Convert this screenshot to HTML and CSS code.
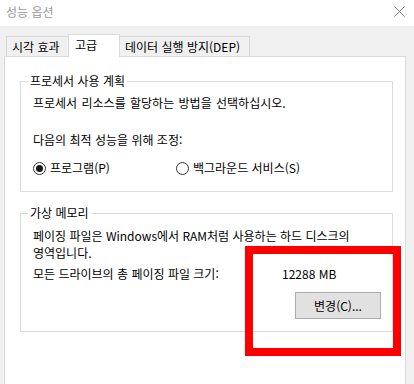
FILE: index.html
```html
<!DOCTYPE html>
<html lang="ko">
<head>
<meta charset="utf-8">
<title>성능 옵션</title>
<link rel="stylesheet" href="styles.css">
</head>
<body>
<div class="window">
  <div class="titlebar">
    <span class="title">성능 옵션</span>
    <svg class="close" width="11" height="11" viewBox="0 0 11 11"><path d="M0.5 0.5 L10.5 10.5 M10.5 0.5 L0.5 10.5" stroke="#7a7a7a" stroke-width="1" fill="none"/></svg>
  </div>
  <div class="tabs">
    <div class="tab tab-visual">시각 효과</div>
    <div class="tab tab-adv selected">고급</div>
    <div class="tab tab-dep">데이터 실행 방지(DEP)</div>
  </div>
  <div class="panel">
    <fieldset class="group group-cpu">
      <legend>프로세서 사용 계획</legend>
      <p class="line first">프로세서 리소스를 할당하는 방법을 선택하십시오.</p>
      <p class="line adjust">다음의 최적 성능을 위해 조정:</p>
      <div class="radios">
        <label class="radio radio-prog"><span class="circle checked"></span>프로그램(P)</label>
        <label class="radio"><span class="circle"></span>백그라운드 서비스(S)</label>
      </div>
    </fieldset>
    <fieldset class="group group-vm">
      <legend>가상 메모리</legend>
      <p class="desc">페이징 파일은 Windows에서 RAM처럼 사용하는 하드 디스크의<br>영역입니다.</p>
      <div class="total"><span class="total-label">모든 드라이브의 총 페이징 파일 크기:</span><span class="total-value">12288 MB</span></div>
      <div class="btnrow"><button class="btn">변경(C)...</button></div>
    </fieldset>
  </div>
  <div class="highlight"></div>
</div>
</body>
</html>
```
FILE: styles.css
```css
html, body {
  margin: 0;
  padding: 0;
}
body {
  width: 414px;
  height: 384px;
  overflow: hidden;
  background: #f0f0f0;
  font-family: "Noto Sans CJK KR", "Noto Sans", sans-serif;
  font-size: 12px;
  color: #000;
}
.window {
  position: relative;
  width: 414px;
  height: 384px;
}
.titlebar {
  height: 26px;
  background: #fff;
  display: flex;
  align-items: center;
  justify-content: space-between;
  padding: 0 9px 0 6px;
  box-sizing: border-box;
}
.title {
  color: #9a9a9a;
  font-size: 12px;
  line-height: 16px;
  margin-top: -3px;
}
.close {
  margin-top: -3px;
}
.tabs {
  height: 30px;
  display: flex;
  align-items: flex-end;
  padding-left: 6px;
  position: relative;
  z-index: 2;
}
.tab {
  box-sizing: border-box;
  height: 20px;
  border: 1px solid #d9d9d9;
  border-bottom: none;
  padding-left: 5px;
  line-height: 19px;
  white-space: nowrap;
  background: #f0f0f0;
}
.tab + .tab {
  margin-left: -1px;
}
.tab-visual { width: 63px; }
.tab-adv { width: 52px; }
.tab-dep { width: 131px; }
.tab.selected {
  height: 23px;
  background: #fff;
  margin-bottom: -1px;
  padding-left: 6px;
  line-height: 19px;
}
.panel {
  margin-left: 4px;
  width: 402px;
  height: 340px;
  box-sizing: border-box;
  background: #fff;
  border: 1px solid #d9d9d9;
  padding: 16px 0 0 15px;
  position: relative;
  z-index: 1;
}
.group {
  width: 373px;
  box-sizing: border-box;
  margin: 0;
  padding: 0 0 0 12px;
  border: 1px solid #dcdcdc;
  min-width: 0;
}
.group legend {
  padding: 0 2px;
  margin-left: -5px;
  line-height: 16px;
  height: 16px;
}
.line {
  margin: 0;
  line-height: 16px;
  white-space: nowrap;
}
.line.first {
  margin-top: 6px;
  word-spacing: 1px;
}
.line.adjust {
  margin-top: 21px;
}
.radios {
  display: flex;
  margin-top: 12px;
  padding-bottom: 15px;
  line-height: 16px;
}
.radio {
  display: flex;
  align-items: center;
  white-space: nowrap;
}
.radio-prog {
  width: 143px;
}
.circle {
  width: 13px;
  height: 13px;
  box-sizing: border-box;
  border: 1px solid #333;
  border-radius: 50%;
  margin-right: 4px;
  display: flex;
  align-items: center;
  justify-content: center;
}
.circle.checked::after {
  content: "";
  width: 7px;
  height: 7px;
  border-radius: 50%;
  background: #1a1a1a;
}
.group-vm {
  margin-top: 13px;
}
.desc {
  margin: 6px 0 0;
  line-height: 17px;
  white-space: nowrap;
}
.total {
  display: flex;
  margin-top: 5px;
  line-height: 16px;
  white-space: nowrap;
}
.total-label {
  width: 249px;
}
.btnrow {
  display: flex;
  justify-content: flex-end;
  margin-top: 10px;
  padding-right: 11px;
  padding-bottom: 12px;
}
.btn {
  width: 86px;
  height: 27px;
  background: #e1e1e1;
  border: 1px solid #adadad;
  font-family: "Noto Sans CJK KR", "Noto Sans", sans-serif;
  font-size: 12px;
  color: #000;
  padding: 0;
  line-height: 16px;
}
.highlight {
  position: absolute;
  left: 245px;
  top: 246px;
  width: 156px;
  height: 110px;
  box-sizing: border-box;
  border: 8px solid #ff0000;
  z-index: 5;
}
```
